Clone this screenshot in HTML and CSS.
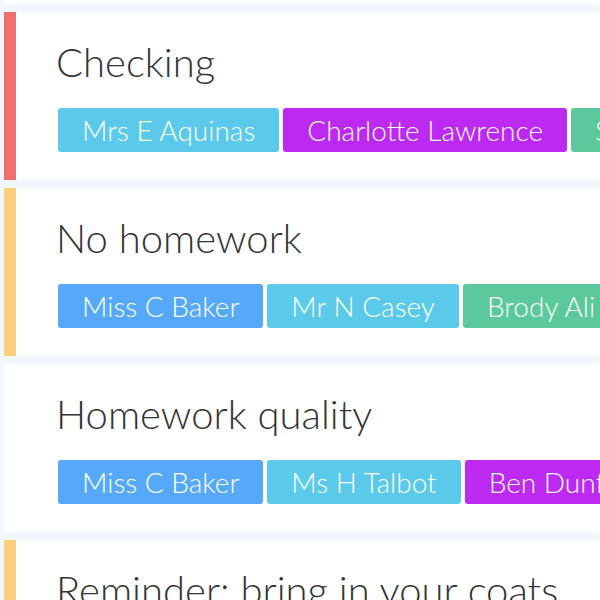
FILE: index.html
```html
<!DOCTYPE html>
<html lang="en">
<head>
  <meta charset="UTF-8" />
  <meta name="viewport" content="width=device-width, initial-scale=1.0"/>
  <title>Notices</title>
  <link rel="stylesheet" href="styles.css">
</head>
<body>
  <div class="notice-list">
    <div class="notice">
      <h2 class="notice-title">Late to lesson</h2>
      <div class="tags">
        <span class="tag tag-blue">Mr N Casey</span>
      </div>
    </div>

    <div class="notice notice-red">
      <h2 class="notice-title">Checking</h2>
      <div class="tags">
        <span class="tag tag-cyan">Mrs E Aquinas</span>
        <span class="tag tag-purple">Charlotte Lawrence</span>
        <span class="tag tag-green">Sophie Turner</span>
      </div>
    </div>

    <div class="notice notice-yellow">
      <h2 class="notice-title">No homework</h2>
      <div class="tags">
        <span class="tag tag-blue">Miss C Baker</span>
        <span class="tag tag-cyan">Mr N Casey</span>
        <span class="tag tag-green">Brody Ali</span>
      </div>
    </div>

    <div class="notice">
      <h2 class="notice-title">Homework quality</h2>
      <div class="tags">
        <span class="tag tag-blue">Miss C Baker</span>
        <span class="tag tag-cyan">Ms H Talbot</span>
        <span class="tag tag-purple">Ben Dunford</span>
      </div>
    </div>

    <div class="notice notice-yellow">
      <h2 class="notice-title">Reminder: bring in your coats</h2>
      <div class="tags">
        <span class="tag tag-blue">Miss C Baker</span>
      </div>
    </div>
  </div>
</body>
</html>
```

FILE: styles.css
```css
html, body {
  margin: 0;
  height: 100%;
  overflow: hidden;
}

body {
  font-family: Lato, "Open Sans", sans-serif;
  background-color: #f0f7fd;
  color: #333;
}

/* list is scrolled a little way down */
.notice-list {
  display: flex;
  flex-direction: column;
  gap: 8px;
  padding-left: 4px;
  margin-top: -164px;
}

.notice {
  background-color: #fff;
  border-left: 12px solid #fff;
  border-radius: 4px;
  padding: 26px 0 28px 42px;
  white-space: nowrap;
  overflow: hidden;
}

.notice-red {
  border-left-color: #f0716b;
  border-radius: 0;
}

.notice-yellow {
  border-left-color: #f9d079;
  border-radius: 0;
}

.notice-title {
  margin: 0 0 22px -2px;
  font-size: 40px;
  font-weight: 300;
  line-height: 48px;
}

.tags {
  display: flex;
  gap: 4px;
}

.tag {
  display: inline-block;
  height: 44px;
  line-height: 44px;
  padding: 0 24px;
  border-radius: 3px;
  color: #fff;
  font-size: 28px;
  font-weight: 300;
}

.tag-cyan {
  background-color: #5bc9ea;
}

.tag-purple {
  background-color: #bc2af2;
}

.tag-green {
  background-color: #5bc99b;
}

.tag-blue {
  background-color: #56a9f8;
}
```
